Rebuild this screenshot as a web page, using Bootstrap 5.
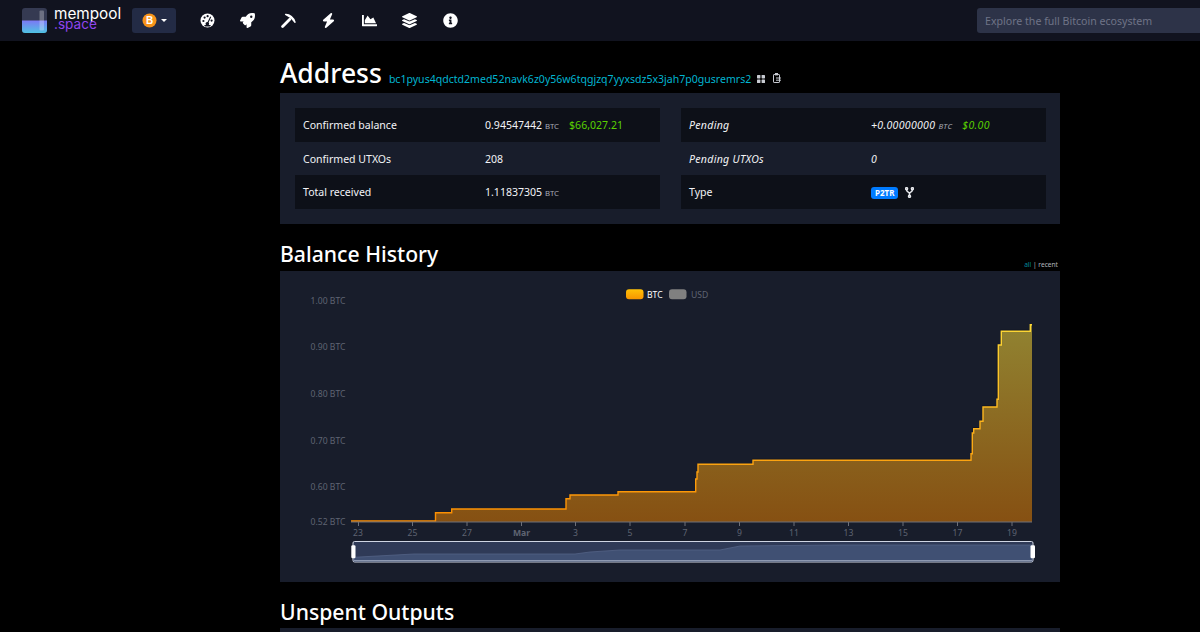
<!doctype html>
<html lang="en">
<head>
<meta charset="utf-8">
<title>Address - mempool</title>
<link href="https://cdn.jsdelivr.net/npm/bootstrap@5.3.0/dist/css/bootstrap.min.css" rel="stylesheet">
<style>
html,body{height:632px;background:#000;color:#fff;font-family:"Noto Sans","Open Sans",sans-serif}
.topbar{height:41px;background:#11131f;padding:0 0 0 22px}
.brandmark{width:25px;height:25px;flex:none}
.brandtxt{font-family:"Inter",sans-serif;margin-left:7px;width:67px;line-height:11px;font-size:15.3px;color:#fff;padding-bottom:4px}
.brandtxt span{display:block;color:#8f45ee;font-size:13.6px}
.netbtn{width:44px;height:25px;margin-left:11px;background:#232b45;border-radius:3px;flex:none}
.netbtn::after{content:"";margin-left:4px;border-top:3.5px solid #fff;border-left:3.5px solid transparent;border-right:3.5px solid transparent}
.navitems{margin-left:11px}
.navitem{width:40.5px;height:41px;color:#fff}
.searchbox{width:223px;height:25px;background:#2d3348;border:0;border-radius:3px 0 0 3px;padding:0 8px;color:#fff;font-size:10.6px;font-family:"Noto Sans",sans-serif}
.searchbox::placeholder{color:#6f7387;opacity:1}
.pagewrap{width:780px;margin-left:280px}
.pagehead{height:52px;padding-top:13px}
.pagehead h1{font-size:26.5px;font-weight:500;margin:0;line-height:38px}
.addrlink{font-size:10.55px;color:#00b5d1;text-decoration:none;margin-left:7px}
.headglyph{margin-left:6px}
.infopanel{background:#181d2b;padding:15px 14px 15px 15px;height:131px;gap:21px}
.infotbl{flex:1 1 0;--bs-table-bg:transparent;--bs-table-color:#fff;margin:0;font-size:10.55px;table-layout:fixed}
.infotbl td{padding:2px 8px 0;height:33.7px;vertical-align:middle;color:#f2f3f6}
.infotbl tr:nth-child(odd) td{background:#0d1018}
.infotbl td:first-child{width:182px}
.infotbl .italrow td{letter-spacing:.3px}
.unitlbl{font-size:7.8px;color:#a6a9b3;margin-left:0}
.fiatamt{color:#5ad000;margin-left:10px}
.scripttag{background:#007bff;color:#fff;font-size:8px;font-weight:700;padding:1px 4px;border-radius:3px;display:inline-block;line-height:10px}
.forkglyph{margin-left:7px;vertical-align:-2px}
.sectiontitle{font-size:21.2px;font-weight:500;margin:0;line-height:30px}
.histhead{height:47px;padding-bottom:2px}
.rangepick{font-size:6.6px;color:#b3b5bd;line-height:10px;padding-right:2px;margin-bottom:-1px}
.rangepick span{color:#00899e}
.chartpanel{background:#181d2b;height:311px}
.chartpanel svg{display:block;font-family:"Noto Sans",sans-serif}
.axistxt{font-size:8.6px;fill:#5f6472}
.utxohead{height:46px;padding-top:15px}
.utxopanel{background:#181d2b;height:60px}
</style>
</head>
<body class="overflow-hidden">
<nav class="topbar d-flex align-items-center">
  <svg class="brandmark" viewBox="0 0 25 25" role="img" aria-label="mempool logo">
    <defs><linearGradient id="lq" x1="0" y1="0" x2="0" y2="1"><stop offset="0" stop-color="#7c78f5"/><stop offset="1" stop-color="#4fc3e3"/></linearGradient></defs>
    <rect width="25" height="25" rx="3" fill="#353a52"/>
    <path d="M0 12.5h25V22a3 3 0 0 1-3 3H3a3 3 0 0 1-3-3z" fill="url(#lq)"/>
    <rect x="17.5" y="2.5" width="4.5" height="20" rx="1" fill="#fff" opacity=".28"/>
  </svg>
  <div class="brandtxt">mempool<span>.space</span></div>
  <div class="netbtn d-flex align-items-center justify-content-center">
    <svg width="15" height="15" viewBox="0 0 15 15"><circle cx="7.5" cy="7.5" r="7" fill="#f7931a"/><text x="7.5" y="11" text-anchor="middle" font-size="10" font-weight="700" fill="#fff" font-family="Liberation Sans,sans-serif">B</text></svg>
  </div>
  <div class="navitems d-flex">
    <div class="navitem d-flex align-items-center justify-content-center"><svg width="15" height="15" viewBox="0 0 15 15"><circle cx="7.5" cy="7.5" r="7" fill="#fff"/><g fill="#11131f"><circle cx="3.4" cy="8" r="1.1"/><circle cx="4.6" cy="4.6" r="1.1"/><circle cx="7.6" cy="3.2" r="1.1"/><circle cx="11.6" cy="7.6" r="1.1"/><path d="M10.2 3.4l1 .5-2.6 5.6a1.8 1.8 0 1 1-1-.5z"/><path d="M4 12h7l-1.2 1.6H5.2z"/></g></svg></div>
    <div class="navitem d-flex align-items-center justify-content-center"><svg width="15" height="15" viewBox="0 0 512 512" fill="#fff"><path d="M505.12 19.09c-1.19-5.53-6.66-11-12.21-12.19C460.72 0 435.51 0 410.41 0 307.18 0 245.27 55.2 199.05 128H94.84c-16.35.02-35.56 11.88-42.89 26.48L2.52 253.3A28.4 28.4 0 0 0 0 264a24 24 0 0 0 24 24h103.81l-22.47 22.47c-11.37 11.36-13 32.26 0 45.25l50.91 50.9c11.16 11.19 32.16 13.16 45.28 0L224 384.16V488a24 24 0 0 0 24 24 28.56 28.56 0 0 0 10.71-2.52l98.73-49.39c14.63-7.3 26.51-26.5 26.51-42.86V312.8c72.6-46.31 128.03-108.41 128.03-211.1.1-25.2.1-50.4-6.86-82.61zM384.04 168a40 40 0 1 1 40.01-40 40 40 0 0 1-40.01 40z"/></svg></div>
    <div class="navitem d-flex align-items-center justify-content-center"><svg width="15" height="15" viewBox="0 0 15 15" fill="none" stroke="#fff"><path d="M1.6 13.4L8.8 6.2" stroke-width="2.8" stroke-linecap="round"/><path d="M4.6 1.4C8.6 1.2 12.8 4.4 14 9.2L10.4 5z" fill="#fff" stroke-width="1.4" stroke-linejoin="round"/></svg></div>
    <div class="navitem d-flex align-items-center justify-content-center"><svg width="13" height="15" viewBox="0 0 448 512" fill="#fff"><path d="M349.4 44.6c5.9-13.7 1.5-29.7-10.6-38.5s-28.6-8-39.9 1.8l-256 224c-10 8.8-13.6 22.9-8.9 35.3S50.7 288 64 288H175.5L98.6 467.4c-5.9 13.7-1.5 29.7 10.6 38.5s28.6 8 39.9-1.8l256-224c10-8.8 13.6-22.9 8.9-35.3s-16.6-20.7-30-20.7H272.5L349.4 44.6z"/></svg></div>
    <div class="navitem d-flex align-items-center justify-content-center"><svg width="15" height="15" viewBox="0 0 512 512" fill="#fff"><path d="M500 384c6.6 0 12 5.4 12 12v40c0 6.6-5.4 12-12 12H12c-6.6 0-12-5.4-12-12V76c0-6.6 5.4-12 12-12h40c6.6 0 12 5.4 12 12v308h436zM372.7 159.5L288 216l-85.3-113.7c-5.1-6.8-15.5-6.3-19.9 1L96 248v104h384l-89.9-187.8c-3.2-6.5-11.4-8.7-17.4-4.7z"/></svg></div>
    <div class="navitem d-flex align-items-center justify-content-center"><svg width="15" height="15" viewBox="0 0 512 512" fill="#fff"><path d="M12.41 148.02l232.94 105.67c6.8 3.09 14.49 3.09 21.29 0l232.94-105.67c16.55-7.51 16.55-32.52 0-40.03L266.65 2.31a25.607 25.607 0 0 0-21.29 0L12.41 107.98c-16.55 7.51-16.55 32.53 0 40.04zm487.18 88.28l-58.09-26.33-161.64 73.27c-7.56 3.43-15.59 5.17-23.86 5.17s-16.29-1.74-23.86-5.17L70.51 209.97l-58.1 26.33c-16.55 7.5-16.55 32.5 0 40l232.94 105.59c6.8 3.08 14.49 3.08 21.29 0L499.59 276.3c16.55-7.5 16.55-32.5 0-40zm0 127.8l-57.87-26.23-161.86 73.37c-7.56 3.43-15.59 5.17-23.86 5.17s-16.29-1.74-23.86-5.17L70.29 337.87 12.41 364.1c-16.55 7.5-16.55 32.5 0 40l232.94 105.59c6.8 3.08 14.49 3.08 21.29 0L499.59 404.1c16.55-7.5 16.55-32.5 0-40z"/></svg></div>
    <div class="navitem d-flex align-items-center justify-content-center"><svg width="15" height="15" viewBox="0 0 512 512" fill="#fff"><path d="M256 8C119.043 8 8 119.083 8 256c0 136.997 111.043 248 248 248s248-111.003 248-248C504 119.083 392.957 8 256 8zm0 110c23.196 0 42 18.804 42 42s-18.804 42-42 42-42-18.804-42-42 18.804-42 42-42zm56 254c0 6.627-5.373 12-12 12h-88c-6.627 0-12-5.373-12-12v-24c0-6.627 5.373-12 12-12h12v-64h-12c-6.627 0-12-5.373-12-12v-24c0-6.627 5.373-12 12-12h64c6.627 0 12 5.373 12 12v100h12c6.627 0 12 5.373 12 12v24z"/></svg></div>
  </div>
  <input class="searchbox ms-auto" type="text" placeholder="Explore the full Bitcoin ecosystem">
</nav>

<main class="pagewrap">
  <div class="pagehead d-flex align-items-baseline">
    <h1>Address</h1>
    <a class="addrlink" href="#">bc1pyus4qdctd2med52navk6z0y56w6tqgjzq7yyxsdz5x3jah7p0gusremrs2</a>
    <svg class="headglyph" width="8" height="8" viewBox="0 0 8 8" fill="#c9ccd3"><rect width="3.4" height="3.4" rx=".6"/><rect x="4.6" width="3.4" height="3.4" rx=".6"/><rect y="4.6" width="3.4" height="3.4" rx=".6"/><rect x="4.6" y="4.6" width="3.4" height="3.4" rx=".6"/></svg>
    <svg class="headglyph ms-2" width="8" height="10" viewBox="0 0 8 10" fill="none" stroke="#c9ccd3"><rect x=".5" y="1.5" width="6" height="8" rx=".6"/><rect x="2" y="0" width="3" height="2.4" fill="#c9ccd3" stroke="none"/><path d="M3 5h5M3 7.2h5"/></svg>
  </div>
  <section class="infopanel d-flex">
    <table class="table table-borderless infotbl"><tbody>
      <tr><td>Confirmed balance</td><td>0.94547442 <span class="unitlbl">BTC</span><span class="fiatamt">$66,027.21</span></td></tr>
      <tr><td>Confirmed UTXOs</td><td>208</td></tr>
      <tr><td>Total received</td><td>1.11837305 <span class="unitlbl">BTC</span></td></tr>
    </tbody></table>
    <table class="table table-borderless infotbl"><tbody>
      <tr class="fst-italic italrow"><td>Pending</td><td>+0.00000000 <span class="unitlbl">BTC</span><span class="fiatamt">$0.00</span></td></tr>
      <tr class="fst-italic italrow"><td>Pending UTXOs</td><td>0</td></tr>
      <tr><td>Type</td><td><span class="scripttag">P2TR</span><svg class="forkglyph" width="9" height="11" viewBox="0 0 9 11" fill="none" stroke="#e8eaee" stroke-width="1.5"><circle cx="1.6" cy="1.7" r="1"/><circle cx="7.4" cy="1.7" r="1"/><circle cx="4.5" cy="9.3" r="1"/><path d="M1.6 2.8c0 2.6 2.9 2 2.9 3.8v1.6M7.4 2.8c0 2.6-2.9 2-2.9 3.8"/></svg></td></tr>
    </tbody></table>
  </section>

  <div class="histhead d-flex justify-content-between align-items-end">
    <h2 class="sectiontitle">Balance History</h2>
    <div class="rangepick"><span>all</span> | recent</div>
  </div>

  <section class="chartpanel">
    <svg width="780" height="311" viewBox="280 271 780 311">
      <defs>
        <linearGradient id="arealg" gradientUnits="userSpaceOnUse" x1="0" y1="325" x2="0" y2="522"><stop offset="0" stop-color="#918331"/><stop offset="1" stop-color="#865012"/></linearGradient>
        <linearGradient id="linelg" gradientUnits="userSpaceOnUse" x1="0" y1="325" x2="0" y2="522"><stop offset="0" stop-color="#fdd835"/><stop offset="1" stop-color="#fb8c00"/></linearGradient>
        <linearGradient id="btcleg" x1="0" y1="0" x2="0" y2="1"><stop offset="0" stop-color="#ffc107"/><stop offset="1" stop-color="#f79400"/></linearGradient>
      </defs>
      <rect x="626" y="289.3" width="17.5" height="10" rx="3" fill="url(#btcleg)"/>
      <text x="647" y="298" font-size="8.6" fill="#fff">BTC</text>
      <rect x="669" y="289.3" width="17.5" height="10" rx="3" fill="#808080"/>
      <text x="691" y="298" font-size="8.6" fill="#5f6472">USD</text>
      <g class="axistxt" text-anchor="end">
        <text x="345.5" y="303.5">1.00 BTC</text><text x="345.5" y="350">0.90 BTC</text><text x="345.5" y="396.5">0.80 BTC</text><text x="345.5" y="443.5">0.70 BTC</text><text x="345.5" y="490">0.60 BTC</text><text x="345.5" y="525">0.52 BTC</text>
      </g>
      <path fill="url(#arealg)" d="M351 522V521H435.5V512.7H451.7V509H566V498.7H570V495H618V491.7H695.7V479H697V472H698V464.3H753V460.3H971V453.7H972.3V433H973.7V428.7H980V421.3H983V407H997V399.3H998.3V345H1001.3V331.3H1030.3V324.7H1032V522Z"/>
      <path fill="none" stroke="#0b1020" stroke-width="1" opacity=".7" transform="translate(-1 -1)" d="M753 460.3H971M973.7 428.7H980M983 407H997M998.3 399V345M1001.3 331.3H1030"/>
      <path fill="none" stroke="url(#linelg)" stroke-width="1.4" d="M351 521H435.5V512.7H451.7V509H566V498.7H570V495H618V491.7H695.7V479H697V472H698V464.3H753V460.3H971V453.7H972.3V433H973.7V428.7H980V421.3H983V407H997V399.3H998.3V345H1001.3V331.3H1030.3V324.7H1032"/>
      <path stroke="#6e7079" stroke-width="1" fill="none" d="M351 522H1032M358.5 522v4M412.5 522v4M467 522v4M521.5 522v4M575.5 522v4M630 522v4M685 522v4M739.5 522v4M794 522v4M848.5 522v4M903 522v4M957.5 522v4M1012 522v4"/>
      <g class="axistxt" text-anchor="middle">
        <text x="358" y="535.5">23</text><text x="412.5" y="535.5">25</text><text x="467" y="535.5">27</text><text x="521.5" y="535.5" font-weight="700">Mar</text><text x="575.5" y="535.5">3</text><text x="630" y="535.5">5</text><text x="685" y="535.5">7</text><text x="739.5" y="535.5">9</text><text x="794" y="535.5">11</text><text x="848.5" y="535.5">13</text><text x="903" y="535.5">15</text><text x="957.5" y="535.5">17</text><text x="1012" y="535.5">19</text>
      </g>
      <rect x="353" y="541.5" width="680" height="20.5" rx="1.5" fill="#2f3a57" stroke="#cfd5e3" stroke-width="1"/>
      <path fill="#405073" stroke="#536285" stroke-width=".8" d="M354 557.3L414 554H575L590 552L620 550H720L735 547L740 546L840 545H1032V561H354Z"/>
      <rect x="353.5" y="560" width="679" height="1" fill="#8e99b2"/>
      <rect x="351.3" y="545.3" width="4.2" height="13" rx="1.2" fill="#fff"/>
      <rect x="1030.5" y="545.3" width="4.5" height="13" rx="1.2" fill="#fff"/>
    </svg>
  </section>

  <div class="utxohead"><h2 class="sectiontitle">Unspent Outputs</h2></div>
  <section class="utxopanel"></section>
</main>
<script src="https://cdn.jsdelivr.net/npm/bootstrap@5.3.0/dist/js/bootstrap.bundle.min.js"></script>
</body>
</html>
